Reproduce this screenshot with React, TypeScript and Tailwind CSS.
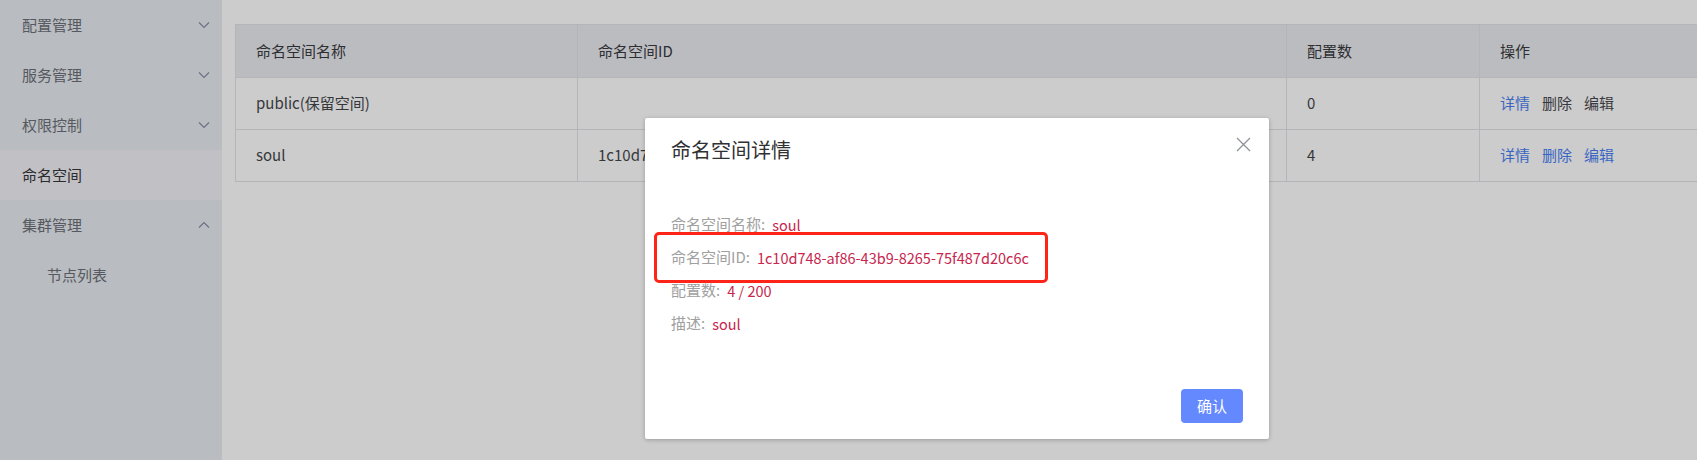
import React from 'react';

const FONT = 'font-["Noto_Sans_CJK_SC","Noto_Sans",sans-serif]';

const menu = [
  { label: '配置管理', arrow: 'down' },
  { label: '服务管理', arrow: 'down' },
  { label: '权限控制', arrow: 'down' },
  { label: '命名空间', active: true },
  { label: '集群管理', arrow: 'up' },
];

const rows = [
  { name: 'public(保留空间)', id: '', count: '0', muted: true },
  { name: 'soul', id: '1c10d748-af86-43b9-8265-75f487d20c6c', count: '4', muted: false },
];

const details = [
  ['命名空间名称', 'soul'],
  ['命名空间ID', '1c10d748-af86-43b9-8265-75f487d20c6c'],
  ['配置数', '4 / 200'],
  ['描述', 'soul'],
];

const Chevron: React.FC<{ up?: boolean }> = ({ up }) => (
  <svg width="12" height="8" viewBox="0 0 12 8" className="mr-[12px]">
    <path
      d={up ? 'M1 6.5 L6 1.5 L11 6.5' : 'M1 1.5 L6 6.5 L11 1.5'}
      fill="none"
      stroke="#6b7283"
      strokeWidth="1.2"
    />
  </svg>
);

const App: React.FC = () => {
  return (
    <div className={`relative flex w-[1697px] h-[460px] overflow-hidden bg-[#cccccc] text-[15px] ${FONT}`}>
      {/* sidebar */}
      <aside className="w-[222px] shrink-0 bg-[#b9bcc0] flex flex-col">
        {menu.map((m) => (
          <div
            key={m.label}
            className={`h-[50px] flex items-center justify-between pl-[22px] ${
              m.active ? 'bg-[#c1c0c4] text-[#2a2b2e]' : 'text-[#56595f]'
            }`}
          >
            <span>{m.label}</span>
            {m.arrow && <Chevron up={m.arrow === 'up'} />}
          </div>
        ))}
        <div className="h-[50px] flex items-center pl-[47px] text-[#56595f]">节点列表</div>
      </aside>

      {/* main */}
      <main className="flex-1 pt-[24px] pl-[13px]">
        <div className="w-[1500px] border-t border-l border-[#b4b5b9]">
          <div className="flex h-[53px] bg-[#bbbcc0] border-b border-[#b4b5b9] text-[#2d2e31]">
            <div className="w-[342px] flex items-center pl-[20px] border-r border-[#b4b5b9]">命名空间名称</div>
            <div className="w-[709px] flex items-center pl-[20px] border-r border-[#b4b5b9]">命名空间ID</div>
            <div className="w-[193px] flex items-center pl-[20px] border-r border-[#b4b5b9]">配置数</div>
            <div className="flex-1 flex items-center pl-[20px]">操作</div>
          </div>
          {rows.map((r) => (
            <div key={r.name} className="flex h-[52px] border-b border-[#b4b5b9] text-[#36373a]">
              <div className="w-[342px] flex items-center pl-[20px] border-r border-[#b4b5b9]">{r.name}</div>
              <div className="w-[709px] flex items-center pl-[20px] border-r border-[#b4b5b9]">{r.id}</div>
              <div className="w-[193px] flex items-center pl-[20px] border-r border-[#b4b5b9]">{r.count}</div>
              <div className="flex-1 flex items-center pl-[20px] gap-[12px]">
                <span className="text-[#3a66c2]">详情</span>
                <span className={r.muted ? 'text-[#38393c]' : 'text-[#3a66c2]'}>删除</span>
                <span className={r.muted ? 'text-[#38393c]' : 'text-[#3a66c2]'}>编辑</span>
              </div>
            </div>
          ))}
        </div>
      </main>

      {/* dialog */}
      <div className="absolute left-[645px] top-[118px] w-[624px] h-[321px] bg-white rounded-[2px] shadow-[0_1px_4px_rgba(0,0,0,0.25)] flex flex-col">
        <div className="flex items-center justify-between pl-[26px] pr-[18px] pt-[18px] h-[46px]">
          <span className="text-[20px] leading-[28px] text-[#303133]">命名空间详情</span>
          <svg width="15" height="15" viewBox="0 0 15 15" className="self-start mt-[1px]">
            <path d="M1 1 L14 14 M14 1 L1 14" stroke="#909399" strokeWidth="1.3" />
          </svg>
        </div>
        <div className="pl-[26px] pt-[44px] flex flex-col">
          {details.map(([k, v]) => (
            <div key={k} className="h-[33px] flex items-center">
              <span className="text-[#a0a0a0]">{k}:</span>
              <span className="text-[#c7254e] ml-[7px] text-[14.5px]">{v}</span>
            </div>
          ))}
        </div>
        <div className="mt-auto flex justify-end pr-[26px] pb-[16px]">
          <button className="w-[62px] h-[34px] rounded-[4px] bg-[#6489ff] text-white text-[15px]">确认</button>
        </div>
        {/* highlight annotation */}
        <div className="absolute left-[9px] top-[114px] w-[394px] h-[51px] border-[3.5px] border-[#ff2418] rounded-[5px]" />
      </div>
    </div>
  );
};

export default App;
